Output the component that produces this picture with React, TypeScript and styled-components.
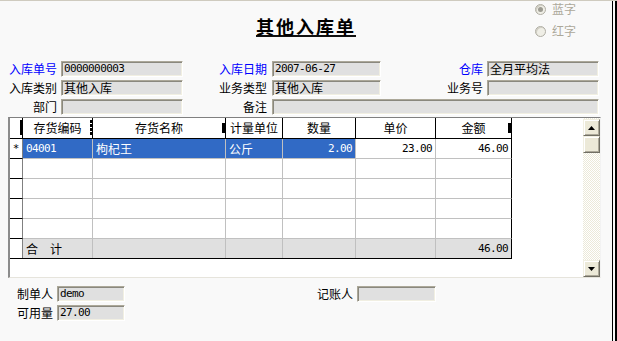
import React from "react";
import styled, { createGlobalStyle } from "styled-components";

const CJK = `"Noto Sans CJK SC", "Noto Sans", sans-serif`;
const MONO = `"DejaVu Sans Mono", "Liberation Mono", monospace`;

const Global = createGlobalStyle`
  html, body { margin: 0; padding: 0; background: #f9f9f9; }
  body { font-family: ${CJK}; font-size: 12px; color: #000; }
  * { box-sizing: border-box; }
`;

const Window = styled.div`
  width: 617px;
  height: 341px;
  overflow: hidden;
  background: #f9f9f9;
  border-top: 1px solid #cfcbbf;
  box-shadow: inset -2px 0 #000, inset -4px 0 #f9f9f9, inset -5px 0 #000;
  display: flex;
  flex-direction: column;
  font-family: ${CJK};
  font-size: 12px;
`;

const Header = styled.div`
  height: 60px;
  display: grid;
  grid-template-columns: 1fr auto 1fr;
  align-items: start;
`;

const Title = styled.h1`
  grid-column: 2;
  margin: 16px 5px 0 0;
  font-size: 18px;
  font-weight: bold;
  line-height: 18px;
  letter-spacing: 2px;
  border-bottom: 2px solid #111;
  padding-bottom: 0;
`;

const RadioGroup = styled.div`
  grid-column: 3;
  justify-self: end;
  margin: 1px 41px 0 0;
  display: flex;
  flex-direction: column;
  gap: 8px;
`;

const RadioItem = styled.label`
  display: flex;
  align-items: center;
  gap: 6px;
  height: 14px;
  line-height: 14px;
  color: #aca899;
`;

const RadioDot = styled.span<{ $checked?: boolean }>`
  width: 11px;
  height: 11px;
  border-radius: 50%;
  border: 1px solid #b0aea4;
  background: #efeee6;
  box-shadow: inset 1px 1px #d0cec4;
  display: flex;
  align-items: center;
  justify-content: center;
  &::after {
    content: "";
    width: 5px;
    height: 5px;
    border-radius: 50%;
    background: ${(p) => (p.$checked ? "#9c9b92" : "transparent")};
  }
`;

const Form = styled.div`
  display: grid;
  grid-template-columns: 61px 122px 89px 109px 106px 112px;
  grid-auto-rows: 16px;
  row-gap: 3px;
`;

const Label = styled.span<{ $blue?: boolean; $pr?: number }>`
  text-align: right;
  padding-right: ${(p) => p.$pr ?? 4}px;
  line-height: 16px;
  white-space: nowrap;
  color: ${(p) => (p.$blue ? "#0000ff" : "#000")};
`;

const Field = styled.div<{ $mono?: boolean; $span?: string }>`
  height: 16px;
  background: #e0e0e0;
  border: 1px solid;
  border-color: #aca899 #fff #fff #aca899;
  box-shadow: inset 1px 1px #8a887e, inset -1px -1px #f1efe2;
  padding: 0 0 0 2px;
  overflow: hidden;
  white-space: nowrap;
  grid-column: ${(p) => p.$span ?? "auto"};
  font-family: ${(p) => (p.$mono ? MONO : CJK)};
  font-size: 12px;
  font-size: ${(p) => (p.$mono ? "11px" : "12px")};
  letter-spacing: ${(p) => (p.$mono ? "-0.6px" : "0")};
  line-height: 14px;
`;

const GridFrame = styled.div`
  margin: 2px 0 0 8px;
  width: 593px;
  height: 161px;
  border-top: 1px solid #808080;
  border-left: 2px solid #8c8c8c;
  border-bottom: 1px solid #e6e4dc;
  border-right: 1px solid #f2f2f2;
  background: #fff;
  display: flex;
`;

const TableArea = styled.div`
  flex: 1;
  background: #fff;
`;

const TEMPLATE = "13px 70px 133px 57px 73px 80px 76px";

const Row = styled.div<{ $head?: boolean; $total?: boolean }>`
  display: grid;
  grid-template-columns: ${TEMPLATE};
  width: 502px;
  height: ${(p) => (p.$head ? 21 : 20)}px;
  border-bottom: ${(p) => (p.$head || p.$total ? "1px solid #000" : "none")};
`;

const HeadCell = styled.div<{ $marker?: "block" | "dots" | "bracket" }>`
  position: relative;
  border-right: 1px solid #000;
  background: #fff;
  text-align: center;
  line-height: 20px;
  white-space: nowrap;
  &::after {
    content: "";
    display: ${(p) => (p.$marker ? "block" : "none")};
    position: absolute;
    right: 0;
    top: ${(p) => (p.$marker === "block" ? 5 : 2)}px;
    width: ${(p) => (p.$marker === "block" ? 3 : 2)}px;
    height: ${(p) => (p.$marker === "block" ? 10 : 15)}px;
    background: ${(p) =>
      p.$marker === "dots"
        ? "repeating-linear-gradient(#000 0 3px, transparent 3px 4px)"
        : "#000"};
  }
`;

const Indicator = styled.div<{ $line?: boolean }>`
  border-right: 1px solid #808080;
  border-bottom: ${(p) => (p.$line ? "1px solid #000" : "none")};
  background: #fff;
  text-align: center;
  font-family: ${MONO};
  font-size: 11px;
  line-height: 19px;
`;

const Cell = styled.div<{
  $align?: "left" | "right";
  $sel?: boolean;
  $mono?: boolean;
  $last?: boolean;
  $total?: boolean;
}>`
  border-right: 1px solid ${(p) => (p.$last ? "#000" : "#c0c0c0")};
  border-bottom: ${(p) => (p.$total ? "none" : "1px solid #c0c0c0")};
  background: ${(p) => (p.$sel ? "#316ac5" : p.$total ? "#e0e0e0" : "#fff")};
  color: ${(p) => (p.$sel ? "#fff" : "#000")};
  text-align: ${(p) => p.$align ?? "left"};
  padding: 0 3px;
  white-space: nowrap;
  overflow: hidden;
  font-family: ${(p) => (p.$mono ? MONO : CJK)};
  font-size: ${(p) => (p.$mono ? "11px" : "12px")};
  letter-spacing: ${(p) => (p.$mono ? "-0.6px" : "0")};
  line-height: ${(p) => (p.$total ? 20 : 19)}px;
`;

const ScrollBar = styled.div`
  width: 17px;
  display: flex;
  flex-direction: column;
  padding-top: 1px;
  background: repeating-conic-gradient(#ece9d8 0 25%, #fff 0 50%) 0 0 / 2px 2px;
`;

const ScrollButton = styled.div`
  height: 17px;
  flex: none;
  background: #ece9d8;
  border: 1px solid;
  border-color: #f1efe2 #716f64 #716f64 #f1efe2;
  box-shadow: inset 1px 1px #fff, inset -1px -1px #aca899;
  display: flex;
  align-items: center;
  justify-content: center;
`;

const Track = styled.div`
  flex: 1;
`;

const Footer = styled.div`
  margin-top: 8px;
  display: grid;
  grid-template-columns: 57px 68px 232px 79px;
  grid-auto-rows: 16px;
  row-gap: 3px;
`;

const Arrow = ({ down }: { down?: boolean }) => (
  <svg width="7" height="4" viewBox="0 0 7 4">
    <polygon points={down ? "0,0 7,0 3.5,4" : "3.5,0 7,4 0,4"} fill="#000" />
  </svg>
);

type Col = {
  title: string;
  marker?: "block" | "dots";
  align?: "left" | "right";
  mono?: boolean;
};

const columns: Col[] = [
  { title: "存货编码", marker: "dots", mono: true },
  { title: "存货名称", marker: "block" },
  { title: "计量单位" },
  { title: "数量", align: "right", mono: true },
  { title: "单价", align: "right", mono: true },
  { title: "金额", marker: "block", align: "right", mono: true },
];

const dataRow = ["04001", "枸杞王", "公斤", "2.00", "23.00", "46.00"];
const selectedCols = 4;

export default function App() {
  return (
    <>
      <Global />
      <Window>
        <Header>
          <Title>其他入库单</Title>
          <RadioGroup>
            <RadioItem>
              <RadioDot $checked />
              蓝字
            </RadioItem>
            <RadioItem>
              <RadioDot />
              红字
            </RadioItem>
          </RadioGroup>
        </Header>

        <Form>
          <Label $blue>入库单号</Label>
          <Field $mono>0000000003</Field>
          <Label $blue $pr={5}>入库日期</Label>
          <Field $mono>2007-06-27</Field>
          <Label $blue>仓库</Label>
          <Field>全月平均法</Field>

          <Label>入库类别</Label>
          <Field>其他入库</Field>
          <Label $pr={5}>业务类型</Label>
          <Field>其他入库</Field>
          <Label>业务号</Label>
          <Field />

          <Label>部门</Label>
          <Field />
          <Label $pr={5}>备注</Label>
          <Field $span="4 / 7" />
        </Form>

        <GridFrame>
          <TableArea>
            <Row $head>
              <HeadCell $marker="bracket" />
              {columns.map((c) => (
                <HeadCell key={c.title} $marker={c.marker}>
                  {c.title}
                </HeadCell>
              ))}
            </Row>
            <Row>
              <Indicator $line>*</Indicator>
              {dataRow.map((v, i) => (
                <Cell
                  key={i}
                  $sel={i < selectedCols}
                  $align={columns[i].align}
                  $mono={columns[i].mono}
                  $last={i === columns.length - 1}
                >
                  {v}
                </Cell>
              ))}
            </Row>
            {[0, 1, 2, 3].map((r) => (
              <Row key={r}>
                <Indicator $line />
                {columns.map((c, i) => (
                  <Cell key={i} $last={i === columns.length - 1} />
                ))}
              </Row>
            ))}
            <Row $total>
              <Indicator />
              {columns.map((c, i) => (
                <Cell
                  key={i}
                  $total
                  $align={c.align}
                  $mono={i === columns.length - 1}
                  $last={i === columns.length - 1}
                >
                  {i === 0 ? "合　计" : i === columns.length - 1 ? "46.00" : ""}
                </Cell>
              ))}
            </Row>
          </TableArea>
          <ScrollBar>
            <ScrollButton>
              <Arrow />
            </ScrollButton>
            <ScrollButton />
            <Track />
            <ScrollButton>
              <Arrow down />
            </ScrollButton>
          </ScrollBar>
        </GridFrame>

        <Footer>
          <Label>制单人</Label>
          <Field $mono>demo</Field>
          <Label>记账人</Label>
          <Field />
          <Label>可用量</Label>
          <Field $mono>27.00</Field>
        </Footer>
      </Window>
    </>
  );
}
